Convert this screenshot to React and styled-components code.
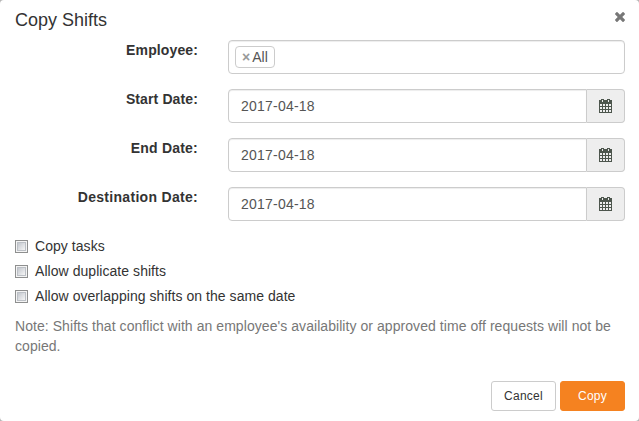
import { useState } from "react";
import styled, { createGlobalStyle } from "styled-components";

const dateFields = [
  { id: "start", label: "Start Date:", tracking: 0.12 },
  { id: "end", label: "End Date:", tracking: 0.22 },
  { id: "destination", label: "Destination Date:", tracking: 0.3 },
];

const options = [
  "Copy tasks",
  "Allow duplicate shifts",
  "Allow overlapping shifts on the same date",
];

const CalendarIcon = () => (
  <svg width="13" height="14" viewBox="0 0 13 14" shapeRendering="crispEdges" aria-hidden="true">
    <path
      fill="#4d564d"
      fillRule="evenodd"
      d="M2 0h3v1h3v-1h3v1h2v13h-13v-13h2zM3 1v2h1v-2zM9 1v2h1v-2zM1 5v2h2v-2zM4 5v2h2v-2zM7 5v2h2v-2zM10 5v2h2v-2zM1 8v2h2v-2zM4 8v2h2v-2zM7 8v2h2v-2zM10 8v2h2v-2zM1 11v2h2v-2zM4 11v2h2v-2zM7 11v2h2v-2zM10 11v2h2v-2z"
    />
  </svg>
);

const CloseIcon = () => (
  <svg width="10" height="10" viewBox="110 366 1188 1188" aria-hidden="true">
    <path
      fill="currentColor"
      d="M1298 1322q0 40-28 68l-136 136q-28 28-68 28t-68-28l-294-294-294 294q-28 28-68 28t-68-28l-136-136q-28-28-28-68t28-68l294-294-294-294q-28-28-28-68t28-68l136-136q28-28 68-28t68 28l294 294 294-294q28-28 68-28t68 28l136 136q28 28 28 68t-28 68l-294 294 294 294q28 28 28 68z"
    />
  </svg>
);

export default function App() {
  const [dates, setDates] = useState({
    start: "2017-04-18",
    end: "2017-04-18",
    destination: "2017-04-18",
  });

  return (
    <>
      <GlobalStyle />
      <Modal>
        <Header>
          <Title>Copy Shifts</Title>
          <CloseButton type="button" aria-label="Close"><CloseIcon /></CloseButton>
        </Header>
        <Fields>
          <Label $tracking={0.12}>Employee:</Label>
          <TagInput>
            <Tag><TagRemove>×</TagRemove>All</Tag>
          </TagInput>
          {dateFields.map(({ id, label, tracking }) => (
            <FieldRow key={id}>
              <Label htmlFor={id} $tracking={tracking}>{label}</Label>
              <InputGroup>
                <Input
                  id={id}
                  type="text"
                  value={dates[id]}
                  onChange={(e) => setDates({ ...dates, [id]: e.target.value })}
                />
                <Addon><CalendarIcon /></Addon>
              </InputGroup>
            </FieldRow>
          ))}
        </Fields>
        <Options>
          {options.map((option) => (
            <Option key={option}>
              <Checkbox type="checkbox" />
              {option}
            </Option>
          ))}
        </Options>
        <Note>
          Note: Shifts that conflict with an employee's availability or approved time off requests will not be copied.
        </Note>
        <Footer>
          <Button type="button">Cancel</Button>
          <Button type="button" $primary>Copy</Button>
        </Footer>
      </Modal>
    </>
  );
}

const GlobalStyle = createGlobalStyle`
  * {
    box-sizing: border-box;
  }
  body {
    margin: 0;
    background: #b5b5b5;
    color: #333;
    font: 14px/20px "Liberation Sans", Arial, sans-serif;
  }
`;

const Modal = styled.section`
  display: flex;
  flex-direction: column;
  height: 421px;
  padding: 8px 14px 10px 15px;
  background: #fff;
  border-radius: 4px;
`;

const Header = styled.header`
  display: flex;
  justify-content: space-between;
  height: 32px;
`;

const Title = styled.h4`
  margin: 0;
  font-size: 18px;
  font-weight: 400;
  line-height: 24px;
`;

const CloseButton = styled.button`
  display: flex;
  height: 10px;
  margin-top: 4px;
  padding: 0;
  border: 0;
  background: none;
  color: #777;
  cursor: pointer;
`;

const Fields = styled.div`
  display: grid;
  grid-template-columns: 183px 1fr;
  column-gap: 30px;
  row-gap: 15px;
`;

const FieldRow = styled.div`
  display: contents;
`;

const Label = styled.label`
  font-weight: 700;
  letter-spacing: ${({ $tracking }) => $tracking}px;
  text-align: right;
`;

const TagInput = styled.div`
  display: flex;
  height: 34px;
  padding: 5px 6px;
  border: 1px solid #ccc;
  border-radius: 4px;
  box-shadow: inset 0 1px 1px rgba(0, 0, 0, 0.075);
`;

const Tag = styled.span`
  display: flex;
  align-items: center;
  height: 22px;
  padding: 0 6px;
  border: 1px solid #ccc;
  border-radius: 4px;
  color: #555;
`;

const TagRemove = styled.span`
  margin-right: 2px;
  color: #999;
  font-weight: 700;
`;

const InputGroup = styled.div`
  display: flex;
  height: 34px;
`;

const Input = styled.input`
  flex: 1;
  min-width: 0;
  padding: 6px 12px;
  border: 1px solid #ccc;
  border-radius: 4px 0 0 4px;
  box-shadow: inset 0 1px 1px rgba(0, 0, 0, 0.075);
  color: #555;
  font: inherit;
  letter-spacing: 0.22px;
`;

const Addon = styled.span`
  display: flex;
  align-items: center;
  justify-content: center;
  width: 38px;
  border: 1px solid #ccc;
  border-left: 0;
  border-radius: 0 4px 4px 0;
  background: #eee;
`;

const Options = styled.div`
  display: flex;
  flex-direction: column;
  gap: 5px;
  margin-top: 15px;
  letter-spacing: 0.05px;
`;

const Option = styled.label`
  display: flex;
  align-items: center;
  gap: 7px;
  height: 20px;
`;

const Checkbox = styled.input`
  appearance: none;
  width: 13px;
  height: 13px;
  margin: 1px 0 0;
  padding: 2px;
  border: 1px solid #8e8f8f;
  background: linear-gradient(135deg, #c3c7ce, #f6f6f6) content-box, #f4f4f4;
  box-shadow: inset 0 0 0 1px #f4f4f4, inset 0 0 0 2px #bcc0c6;
`;

const Note = styled.p`
  margin: 10px 0 0;
  color: #777;
  letter-spacing: 0.06px;
`;

const Footer = styled.footer`
  display: flex;
  justify-content: flex-end;
  gap: 4px;
  margin-top: auto;
`;

const Button = styled.button`
  width: 65px;
  height: 30px;
  padding: 0;
  border: 1px solid ${({ $primary }) => ($primary ? "#f58220" : "#ccc")};
  border-radius: 3px;
  background: ${({ $primary }) => ($primary ? "#f58220" : "#fff")};
  color: ${({ $primary }) => ($primary ? "#fff" : "#333")};
  font: 12px/18px "Liberation Sans", Arial, sans-serif;
  letter-spacing: 0.25px;
  cursor: pointer;
`;
